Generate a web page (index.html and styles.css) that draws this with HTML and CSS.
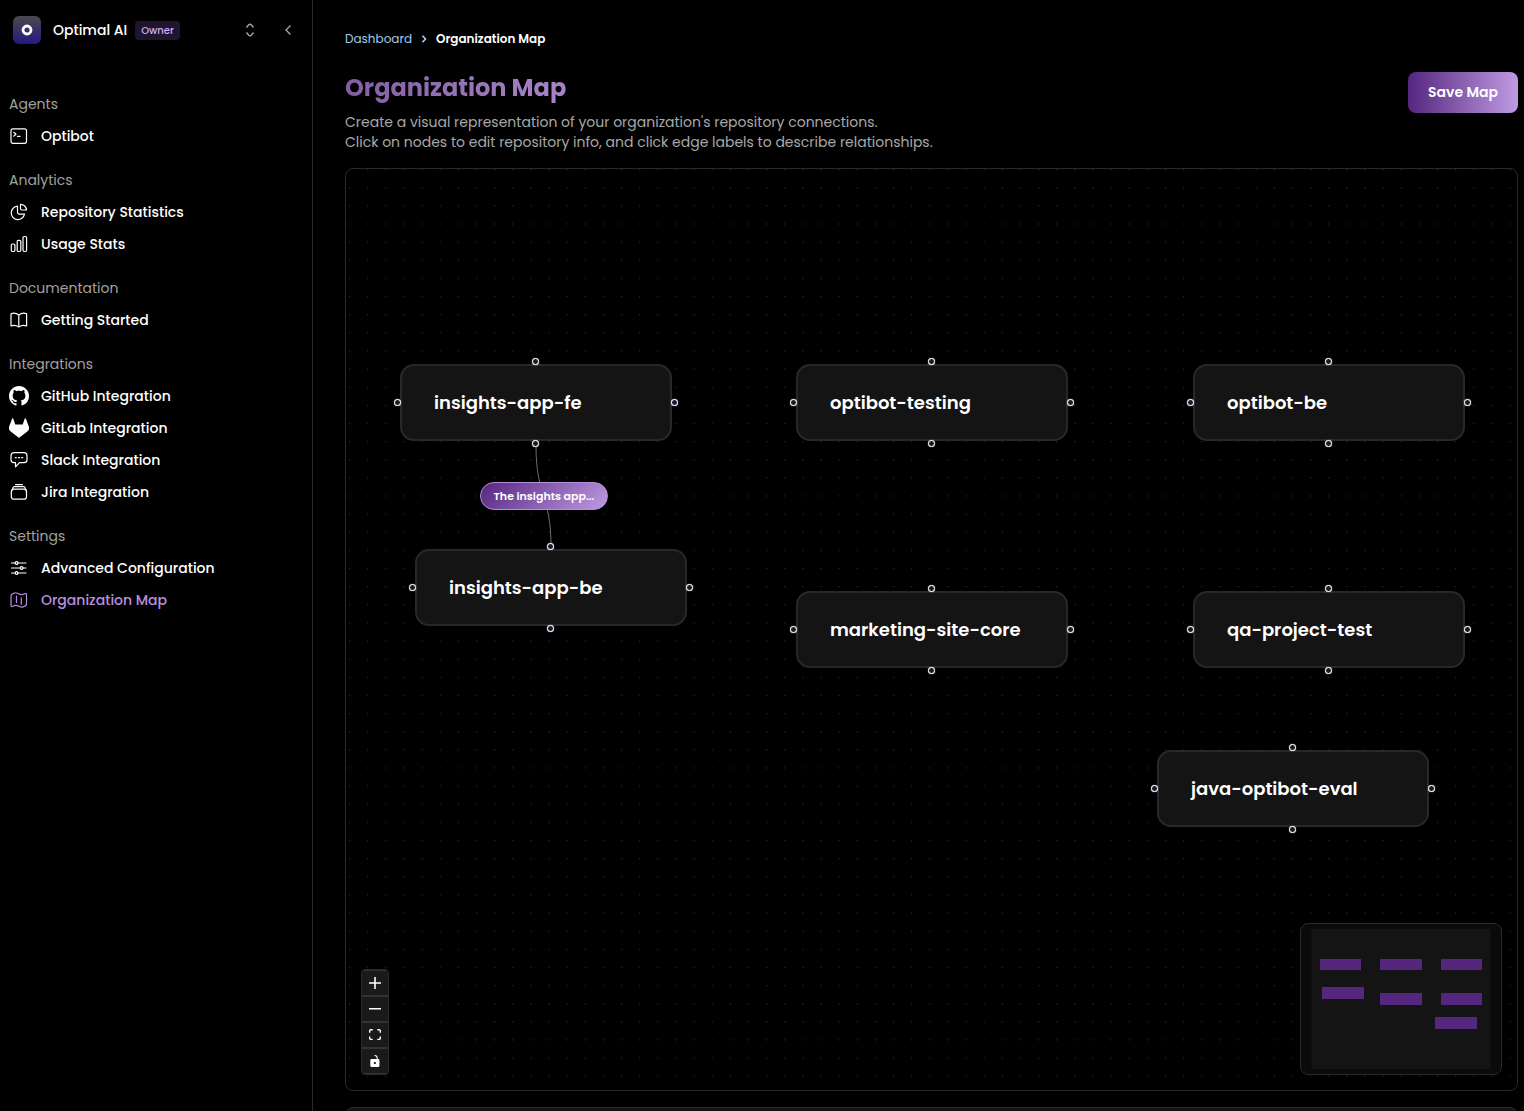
FILE: index.html
```html
<!DOCTYPE html>
<html lang="en">
<head>
  <meta charset="UTF-8">
  <meta name="viewport" content="width=device-width, initial-scale=1.0">
  <title>Organization Map</title>
  <link rel="stylesheet" href="styles.css">
</head>
<body>

  <aside class="sidebar">
    <div class="org">
      <span class="org-logo">
        <svg width="12" height="12" viewBox="0 0 12 12"><circle cx="6" cy="6" r="4" fill="none" stroke="#fff" stroke-width="2.8"/></svg>
      </span>
      <span class="org-name">Optimal AI</span>
      <span class="org-role">Owner</span>
      <button type="button" class="icon-button switch" aria-label="Switch organization">
        <svg width="16" height="16" viewBox="0 0 16 16"><path d="M4.5 5.500 6.500 3q1.500-1.500 3 0l2 2.500M4.500 10.500l2 2.500q1.500 1.500 3 0l2-2.500"/></svg>
      </button>
      <button type="button" class="icon-button" aria-label="Collapse sidebar">
        <svg width="16" height="16" viewBox="0 0 16 16"><path d="M10.500 3.500 6 8l4.500 4.500"/></svg>
      </button>
    </div>

    <nav>
      <section class="nav-group">
        <h2>Agents</h2>
        <a href="#">
          <svg class="icon" viewBox="0 0 20 20"><rect x="2" y="2.800" width="15.500" height="14.500" rx="2"/><path d="M4.800 6.300 7 8.200 4.800 10M8.500 10.400h2.500"/></svg>
          Optibot
        </a>
      </section>

      <section class="nav-group">
        <h2>Analytics</h2>
        <a href="#">
          <svg class="icon" viewBox="0 0 20 20"><path d="M8.500 4.200a6.700 6.700 0 1 0 7 8H10.500q-2 0-2-2zM11.500 2.300v4.500q0 1.200 1.200 1.200h4.800a6 6 0 0 0-6-5.700z"/></svg>
          Repository Statistics
        </a>
        <a href="#">
          <svg class="icon" viewBox="0 0 20 20"><rect x="2.300" y="10" width="3.600" height="7.500" rx="1.200"/><rect x="8.200" y="6.300" width="3.600" height="11.200" rx="1.200"/><rect x="14" y="2.500" width="3.600" height="15" rx="1.200"/></svg>
          Usage Stats
        </a>
      </section>

      <section class="nav-group">
        <h2>Documentation</h2>
        <a href="#">
          <svg class="icon" viewBox="0 0 20 20"><path d="M9.800 5Q6 2 2 3.800V16q4-1.500 7.800 1 3.800-2.500 7.800-1V3.800Q13.500 2 9.800 5zv12"/></svg>
          Getting Started
        </a>
      </section>

      <section class="nav-group">
        <h2>Integrations</h2>
        <a href="#">
          <svg class="icon solid" viewBox="0 0 16 16"><path d="M8 0C3.580 0 0 3.580 0 8c0 3.540 2.290 6.530 5.470 7.590.4.070.550-.170.550-.380 0-.190-.010-.820-.010-1.490-2.010.370-2.530-.490-2.690-.940-.090-.230-.480-.940-.820-1.130-.280-.150-.680-.520-.010-.530.630-.010 1.080.580 1.230.820.720 1.210 1.870.870 2.330.660.070-.520.280-.870.510-1.070-1.780-.200-3.640-.890-3.640-3.950 0-.870.310-1.590.820-2.150-.080-.200-.360-1.020.080-2.120 0 0 .670-.210 2.200.820.640-.180 1.320-.270 2-.270s1.360.090 2 .270c1.530-1.040 2.200-.820 2.200-.820.440 1.100.160 1.920.080 2.120.510.560.820 1.270.820 2.150 0 3.070-1.870 3.750-3.650 3.950.290.250.540.730.540 1.480 0 1.070-.010 1.930-.010 2.200 0 .210.150.460.550.380A8.010 8.010 0 0 0 16 8c0-4.420-3.580-8-8-8z"/></svg>
          GitHub Integration
        </a>
        <a href="#">
          <svg class="icon solid" viewBox="0 0 24 24"><path d="m23.600 9.593-.034-.086L20.300.981a.851.851 0 0 0-.336-.405.875.875 0 0 0-1 .054.875.875 0 0 0-.290.440l-2.205 6.748H7.537L5.332 1.070a.857.857 0 0 0-.290-.441.875.875 0 0 0-1-.054.859.859 0 0 0-.336.405L.433 9.501l-.032.087a6.066 6.066 0 0 0 2.012 7.010l.041.030 4.976 3.727 2.462 1.863 1.500 1.132a1.009 1.009 0 0 0 1.219 0l1.500-1.132 2.462-1.863 5.006-3.749.012-.010a6.068 6.068 0 0 0 2.009-7.003z"/></svg>
          GitLab Integration
        </a>
        <a href="#">
          <svg class="icon" viewBox="0 0 20 20"><path d="M5 2.700h10q3 0 3 3v4q0 3-3 3h-4.500L6.500 16.800v-4.100H5q-3 0-3-3v-4q0-3 3-3z"/><path d="M6.300 7.700h1M9.500 7.700h1M12.700 7.700h1"/></svg>
          Slack Integration
        </a>
        <a href="#">
          <svg class="icon" viewBox="0 0 20 20"><path d="M6.500 2.600h7M4.500 5q.3-.4 1-.4h9q.7 0 1 .4M3 8.500 4.300 5M17 8.500 15.700 5"/><rect x="2.300" y="7.200" width="15.200" height="10" rx="2.500"/></svg>
          Jira Integration
        </a>
      </section>

      <section class="nav-group">
        <h2>Settings</h2>
        <a href="#">
          <svg class="icon" viewBox="0 0 20 20"><path d="M2.500 5h3.800M9 5h8M2.500 10h8.800M14 10h3M2.500 15h3.800M9 15h8"/><circle cx="7.600" cy="5" r="1.400"/><circle cx="12.600" cy="10" r="1.400"/><circle cx="7.600" cy="15" r="1.400"/></svg>
          Advanced Configuration
        </a>
        <a href="#" class="active">
          <svg class="icon" viewBox="0 0 20 20"><path d="M2 6q0-1.300 1.200-1.900L5.500 3q1-.5 2 0l4.500 1.600q.8.300 1.600 0l2-.9q1.900-.7 1.900 1.100V14q0 1.300-1.200 1.900L14 17q-1 .4-2 0l-4.500-1.600q-.8-.3-1.600 0l-2 .9Q2 17 2 15.200zM7.500 6v6.500M12.300 7.800v6.500"/></svg>
          Organization Map
        </a>
      </section>
    </nav>
  </aside>

  <main>
    <nav class="breadcrumb" aria-label="Breadcrumb">
      <a href="#">Dashboard</a>
      <svg width="8" height="8" viewBox="0 0 8 8"><path d="M2.500.8 5.500 4 2.500 7.200" fill="none" stroke="#b5d5f5" stroke-width="1.500"/></svg>
      <span>Organization Map</span>
    </nav>

    <header class="page-header">
      <div>
        <h1>Organization Map</h1>
        <p>Create a visual representation of your organization's repository connections.<br>Click on nodes to edit repository info, and click edge labels to describe relationships.</p>
      </div>
      <button type="button" class="save">Save Map</button>
    </header>

    <div class="canvas">
      <svg class="dots" width="100%" height="100%">
        <defs>
          <pattern id="dots" width="20" height="20" patternUnits="userSpaceOnUse" patternTransform="translate(3 0) scale(.9066)">
            <circle cx=".7" cy=".7" r=".7" fill="#333"/>
          </pattern>
        </defs>
        <rect width="100%" height="100%" fill="url(#dots)"/>
        <path d="M190 277C190 327 205 327 205 377" fill="none" stroke="#6e6e6e"/>
      </svg>

      <div class="node fe">insights-app-fe<i class="handle top"></i><i class="handle right"></i><i class="handle bottom"></i><i class="handle left"></i></div>
      <div class="node testing">optibot-testing<i class="handle top"></i><i class="handle right"></i><i class="handle bottom"></i><i class="handle left"></i></div>
      <div class="node optibot-be">optibot-be<i class="handle top"></i><i class="handle right"></i><i class="handle bottom"></i><i class="handle left"></i></div>
      <div class="node be">insights-app-be<i class="handle top"></i><i class="handle right"></i><i class="handle bottom"></i><i class="handle left"></i></div>
      <div class="node marketing">marketing-site-core<i class="handle top"></i><i class="handle right"></i><i class="handle bottom"></i><i class="handle left"></i></div>
      <div class="node qa">qa-project-test<i class="handle top"></i><i class="handle right"></i><i class="handle bottom"></i><i class="handle left"></i></div>
      <div class="node java">java-optibot-eval<i class="handle top"></i><i class="handle right"></i><i class="handle bottom"></i><i class="handle left"></i></div>

      <button type="button" class="edge-label">The insights app...</button>

      <div class="controls">
        <button type="button" aria-label="Zoom in"><svg viewBox="0 0 32 32"><path d="M32 18.133H18.133V32h-4.266V18.133H0v-4.266h13.867V0h4.266v13.867H32z"/></svg></button>
        <button type="button" aria-label="Zoom out"><svg viewBox="0 0 32 5"><path d="M0 0h32v4.200H0z"/></svg></button>
        <button type="button" aria-label="Fit view"><svg viewBox="0 0 32 30"><path d="M3.692 4.630c0-.530.4-.938.939-.938h5.215V0H4.708C2.130 0 0 2.054 0 4.630v5.216h3.692V4.631zM27.354 0h-5.200v3.692h5.170c.530 0 .984.4.984.939v5.215H32V4.631A4.624 4.624 0 0 0 27.354 0zm.954 24.830c0 .532-.4.940-.939.940h-5.215v3.768h5.215c2.577 0 4.631-2.130 4.631-4.707v-5.139h-3.692v5.139zm-23.677.940c-.531 0-.939-.4-.939-.940v-5.138H0v5.139c0 2.577 2.130 4.707 4.708 4.707h5.138V25.770H4.631z"/></svg></button>
        <button type="button" aria-label="Toggle interactivity"><svg viewBox="0 0 25 32"><path d="M21.333 10.667H19.810V7.619C19.810 3.429 16.380 0 12.190 0c-4.114 1.828-1.370 2.133.305 2.438 1.676.305 4.420 2.590 4.420 5.181v3.048H3.047A3.056 3.056 0 0 0 0 13.714v15.238A3.056 3.056 0 0 0 3.048 32h18.285a3.056 3.056 0 0 0 3.048-3.048V13.714a3.056 3.056 0 0 0-3.048-3.047zM12.190 24.533a3.056 3.056 0 0 1-3.047-3.047 3.056 3.056 0 0 1 3.047-3.048 3.056 3.056 0 0 1 3.048 3.048 3.056 3.056 0 0 1-3.048 3.047z"/></svg></button>
      </div>

      <svg class="minimap" viewBox="0 0 200 150">
        <rect x="10.500" y="5" width="179" height="140" fill="#141414"/>
        <g fill="#54267d">
          <rect x="19" y="35" width="41" height="11"/>
          <rect x="79" y="35" width="42" height="11"/>
          <rect x="140" y="35" width="41" height="11"/>
          <rect x="21" y="63" width="42" height="12"/>
          <rect x="79" y="69" width="42" height="12"/>
          <rect x="140" y="69" width="41" height="12"/>
          <rect x="134" y="93" width="42" height="12"/>
        </g>
      </svg>
    </div>

    <section class="panel"></section>
  </main>

</body>
</html>
```
FILE: styles.css
```css
* {
  box-sizing: border-box;
}

body {
  margin: 0;
  height: 100vh;
  display: flex;
  overflow: hidden;
  background: #000;
  color: #fff;
  font-family: Poppins, Inter, sans-serif;
  font-size: 14px;
  line-height: 20px;
}

button {
  font-family: inherit;
  cursor: pointer;
}

a {
  text-decoration: none;
}

/* sidebar */
.sidebar {
  flex: 0 0 313px;
  border-right: 1px solid #2a2a2a;
}

.org {
  display: flex;
  align-items: center;
  height: 60px;
  margin-bottom: 28px;
  padding: 0 16px 0 13px;
}

.org-logo {
  display: flex;
  align-items: center;
  justify-content: center;
  width: 28px;
  height: 28px;
  margin-right: 12px;
  border-radius: 6px;
  background: linear-gradient(#4a4a4e, #25187f);
}

.org-name {
  font-weight: 500;
}

.org-role {
  margin-left: 8px;
  padding: 0 6px;
  border-radius: 4px;
  background: #20142f;
  color: #cdaef5;
  font-size: 10px;
  font-weight: 500;
  line-height: 19px;
}

.icon-button {
  display: flex;
  padding: 0;
  border: none;
  background: none;
}

.icon-button path {
  fill: none;
  stroke: #a3a3a8;
  stroke-width: 1.4;
}

.switch {
  margin-left: auto;
  margin-right: 22px;
}

.nav-group {
  margin-bottom: 12px;
  padding-left: 9px;
}

.nav-group h2 {
  margin: 0;
  color: #a0a0a0;
  font-size: 14px;
  font-weight: 400;
  line-height: 32px;
}

.nav-group a {
  display: flex;
  align-items: center;
  gap: 12px;
  height: 32px;
  color: #fff;
  font-weight: 500;
}

.nav-group a.active {
  color: #b88ee0;
}

.icon {
  width: 20px;
  height: 20px;
  fill: none;
  stroke: currentColor;
  stroke-width: 1.2;
  stroke-linejoin: round;
  stroke-linecap: round;
}

.icon.solid {
  fill: currentColor;
  stroke: none;
}

/* main */
main {
  flex: 1;
  min-width: 0;
  padding: 29px 6px 0 32px;
  overflow-y: auto;
  scrollbar-width: none;
}

.breadcrumb {
  display: flex;
  align-items: center;
  gap: 8px;
  margin-bottom: 23px;
  font-size: 12px;
}

.breadcrumb a {
  color: #a5cbf0;
}

.breadcrumb span {
  font-weight: 600;
}

.page-header {
  display: flex;
  justify-content: space-between;
  align-items: flex-start;
  margin-bottom: 16px;
}

h1 {
  width: max-content;
  margin: 0 0 8px;
  background: linear-gradient(100deg, #825da2, #a984c8);
  background-clip: text;
  -webkit-background-clip: text;
  color: transparent;
  font-size: 24px;
  font-weight: 700;
  line-height: 32px;
}

.page-header p {
  margin: 0;
  color: #a8a8a8;
}

.save {
  height: 41px;
  padding: 0 20px;
  border: none;
  border-radius: 8px;
  background: linear-gradient(90deg, #55267f, #bf9ae2);
  color: #fff;
  font-size: 14px;
  font-weight: 600;
}

/* map */
.canvas {
  position: relative;
  height: calc(100vh - 188px);
  border: 1px solid #2a2a2a;
  border-radius: 8px;
  overflow: hidden;
}

.dots {
  display: block;
}

.node {
  position: absolute;
  width: 272px;
  height: 77px;
  padding: 0 32px;
  border: 2px solid #282828;
  border-radius: 14px;
  background: #141414;
  font-size: 18px;
  font-weight: 600;
  line-height: 73px;
}

.fe { left: 54px; top: 195px; }
.testing { left: 450px; top: 195px; }
.optibot-be { left: 847px; top: 195px; }
.be { left: 69px; top: 380px; }
.marketing { left: 450px; top: 422px; }
.qa { left: 847px; top: 422px; }
.java { left: 811px; top: 581px; }

.handle {
  position: absolute;
  width: 7px;
  height: 7px;
  border: 1px solid #fff;
  border-radius: 50%;
  background: #1a1a2e;
  box-shadow: 0 0 1px #fff;
}

.handle.top { left: 130px; top: -8px; }
.handle.bottom { left: 130px; bottom: -8px; }
.handle.left { top: 33px; left: -8px; }
.handle.right { top: 33px; right: -8px; }

.edge-label {
  position: absolute;
  left: 134px;
  top: 313px;
  width: 128px;
  height: 28px;
  padding: 0;
  border: 1px solid #b68fdc;
  border-radius: 14px;
  background: linear-gradient(135deg, #55267f, #bf9ae2);
  color: #fff;
  font-size: 11px;
  font-weight: 600;
}

.controls {
  position: absolute;
  left: 15px;
  bottom: 15px;
  border: 1px solid #2a2a2a;
  border-radius: 4px;
  overflow: hidden;
}

.controls button {
  display: flex;
  align-items: center;
  justify-content: center;
  width: 26px;
  height: 26px;
  padding: 0;
  border: solid #333;
  border-width: 1px 0;
  background: #1a1a1a;
}

.controls svg {
  width: 12px;
  max-height: 12px;
  fill: #fff;
}

.minimap {
  position: absolute;
  right: 15px;
  bottom: 15px;
  width: 202px;
  height: 152px;
  border: 1px solid #2a2a2a;
  border-radius: 8px;
  background: #0a0a0a;
}

.panel {
  height: 120px;
  margin-top: 16px;
  border: 1px solid #2a2a2a;
  border-radius: 8px;
  background: #141414;
}
```
